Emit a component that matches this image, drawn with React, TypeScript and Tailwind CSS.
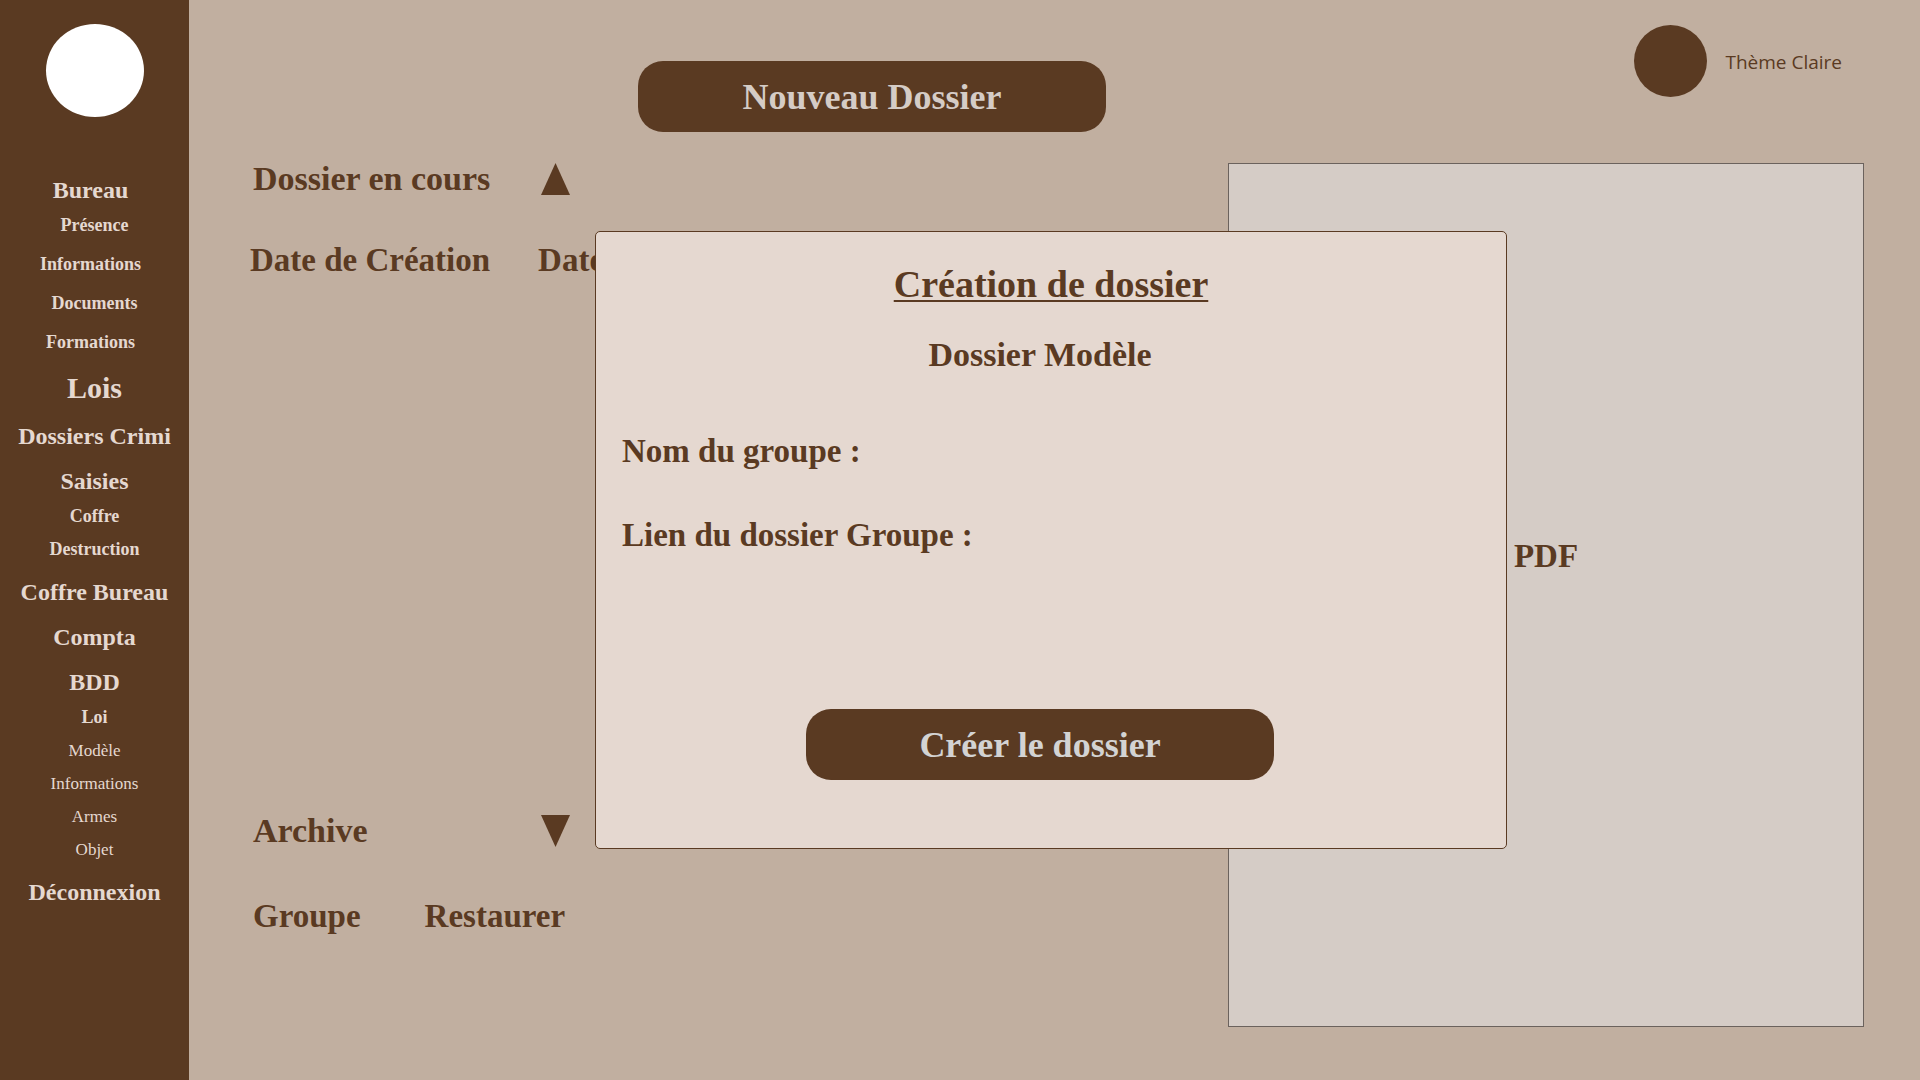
import React from "react";

type NavLink = { label: string; regular?: boolean; shifted?: boolean };
type NavGroup = { label: string; large?: boolean; shifted?: boolean; spaced?: boolean; links?: NavLink[] };

const groups: NavGroup[] = [
  {
    label: "Bureau",
    shifted: true,
    spaced: true,
    links: [
      { label: "Présence" },
      { label: "Informations", shifted: true },
      { label: "Documents" },
      { label: "Formations", shifted: true },
    ],
  },
  { label: "Lois", large: true },
  { label: "Dossiers Crimi" },
  { label: "Saisies", links: [{ label: "Coffre" }, { label: "Destruction" }] },
  { label: "Coffre Bureau" },
  { label: "Compta" },
  {
    label: "BDD",
    links: [
      { label: "Loi" },
      { label: "Modèle", regular: true },
      { label: "Informations", regular: true },
      { label: "Armes", regular: true },
      { label: "Objet", regular: true },
    ],
  },
  { label: "Déconnexion" },
];

function Sidebar() {
  return (
    <aside className="flex w-[189px] shrink-0 flex-col items-center bg-[#5a3a22] pt-6 text-[#e5d8d0]">
      <div className="h-[93px] w-[98px] rounded-[50%] bg-white" />
      <nav aria-label="Navigation principale" className="mt-[53px] w-full">
        <ul className="flex flex-col gap-1.5">
          {groups.map((g) => (
            <li key={g.label}>
              <a
                href="#"
                className={`flex items-center justify-center whitespace-nowrap font-bold ${g.large ? "h-[45px] text-[30px]" : "h-[39px] text-[24px]"} ${g.shifted ? "pr-2" : ""}`}
              >
                {g.label}
              </a>
              {g.links && (
                <ul className={`flex flex-col ${g.spaced ? "gap-1.5" : ""}`}>
                  {g.links.map((l) => (
                    <li key={l.label}>
                      <a
                        href="#"
                        className={`flex h-[33px] items-center justify-center ${l.regular ? "text-[17px]" : "text-[18px] font-bold"} ${l.shifted ? "pr-2" : ""}`}
                      >
                        {l.label}
                      </a>
                    </li>
                  ))}
                </ul>
              )}
            </li>
          ))}
        </ul>
      </nav>
    </aside>
  );
}

function Triangle({ down = false }: { down?: boolean }) {
  return (
    <svg width="29" height="32" viewBox="0 0 29 32" fill="currentColor" aria-hidden="true">
      <path d={down ? "M0 0H29L14.5 32Z" : "M14.5 0L29 32H0Z"} />
    </svg>
  );
}

function SectionToggle({ label, down }: { label: string; down?: boolean }) {
  return (
    <button type="button" className="ml-[3px] flex w-[317px] items-start justify-between text-left text-[34px] leading-[32px] font-bold">
      <span>{label}</span>
      <Triangle down={down} />
    </button>
  );
}

function PrimaryButton({ children, className }: { children: React.ReactNode; className: string }) {
  return (
    <button
      type="button"
      className={`flex h-[71px] w-[468px] items-center justify-center rounded-[25px] bg-[#5a3a22] text-[36px] font-bold ${className}`}
    >
      {children}
    </button>
  );
}

function Field({ id, label }: { id: string; label: string }) {
  return (
    <div className="flex w-full items-center gap-3">
      <label htmlFor={id} className="whitespace-nowrap">
        {label}
      </label>
      <input id={id} type="text" className="h-8 min-w-0 flex-1 bg-transparent outline-none" />
    </div>
  );
}

function CreateDialog() {
  return (
    <div className="absolute inset-0 flex items-center justify-center pr-[7px]">
      <div
        role="dialog"
        aria-labelledby="dialog-title"
        className="w-[912px] rounded-[5px] border border-[#5a3a22] bg-[#e5d8d0] pt-[30px] pb-[68px]"
      >
        <h2
          id="dialog-title"
          className="text-center text-[38px] leading-[44px] underline decoration-2 underline-offset-3"
        >
          Création de dossier
        </h2>
        <form className="flex flex-col items-center pr-12 pl-[26px]">
          <h3 className="mt-[33px] text-[34px] leading-[32px]">Dossier Modèle</h3>
          <div className="mt-16 flex w-full flex-col gap-[52px]">
            <Field id="nom" label="Nom du groupe :" />
            <Field id="lien" label="Lien du dossier Groupe :" />
          </div>
          <PrimaryButton className="mt-[158px] text-[#d3d3d3]">Créer le dossier</PrimaryButton>
        </form>
      </div>
    </div>
  );
}

export default function App() {
  return (
    <div className="flex min-h-screen bg-[#c1afa0] font-['Liberation_Serif',serif]">
      <Sidebar />
      <main className="relative flex flex-1 flex-col text-[33px] leading-[32px] font-bold text-[#5a3a22]">
        <header className="flex h-[163px] items-start justify-between pr-[78px] pl-[449px]">
          <PrimaryButton className="mt-[61px] text-[#d5ccc6]">Nouveau Dossier</PrimaryButton>
          <button
            type="button"
            className="mt-[25px] flex items-center gap-[18px] font-['Open_Sans',sans-serif] text-[19px] font-normal"
          >
            <span className="h-[72px] w-[73px] rounded-[50%] bg-[#5a3a22]" />
            <span className="pt-0.5">Thème Claire</span>
          </button>
        </header>
        <div className="flex flex-1 items-start justify-between pr-14 pl-[61px]">
          <div>
            <section className="min-h-[652px]">
              <SectionToggle label="Dossier en cours" />
              <div className="mt-[49px] flex gap-12">
                <span>Date de Création</span>
                <span>Date</span>
              </div>
            </section>
            <section>
              <SectionToggle label="Archive" down />
              <div className="mt-[53px] ml-[3px] flex gap-16">
                <span>Groupe</span>
                <span>Restaurer</span>
              </div>
            </section>
          </div>
          <section className="flex h-[864px] w-[636px] items-center justify-center border border-[#6b625d] bg-[#d5ccc6] pb-[78px]">
            PDF
          </section>
        </div>
        <CreateDialog />
      </main>
    </div>
  );
}
